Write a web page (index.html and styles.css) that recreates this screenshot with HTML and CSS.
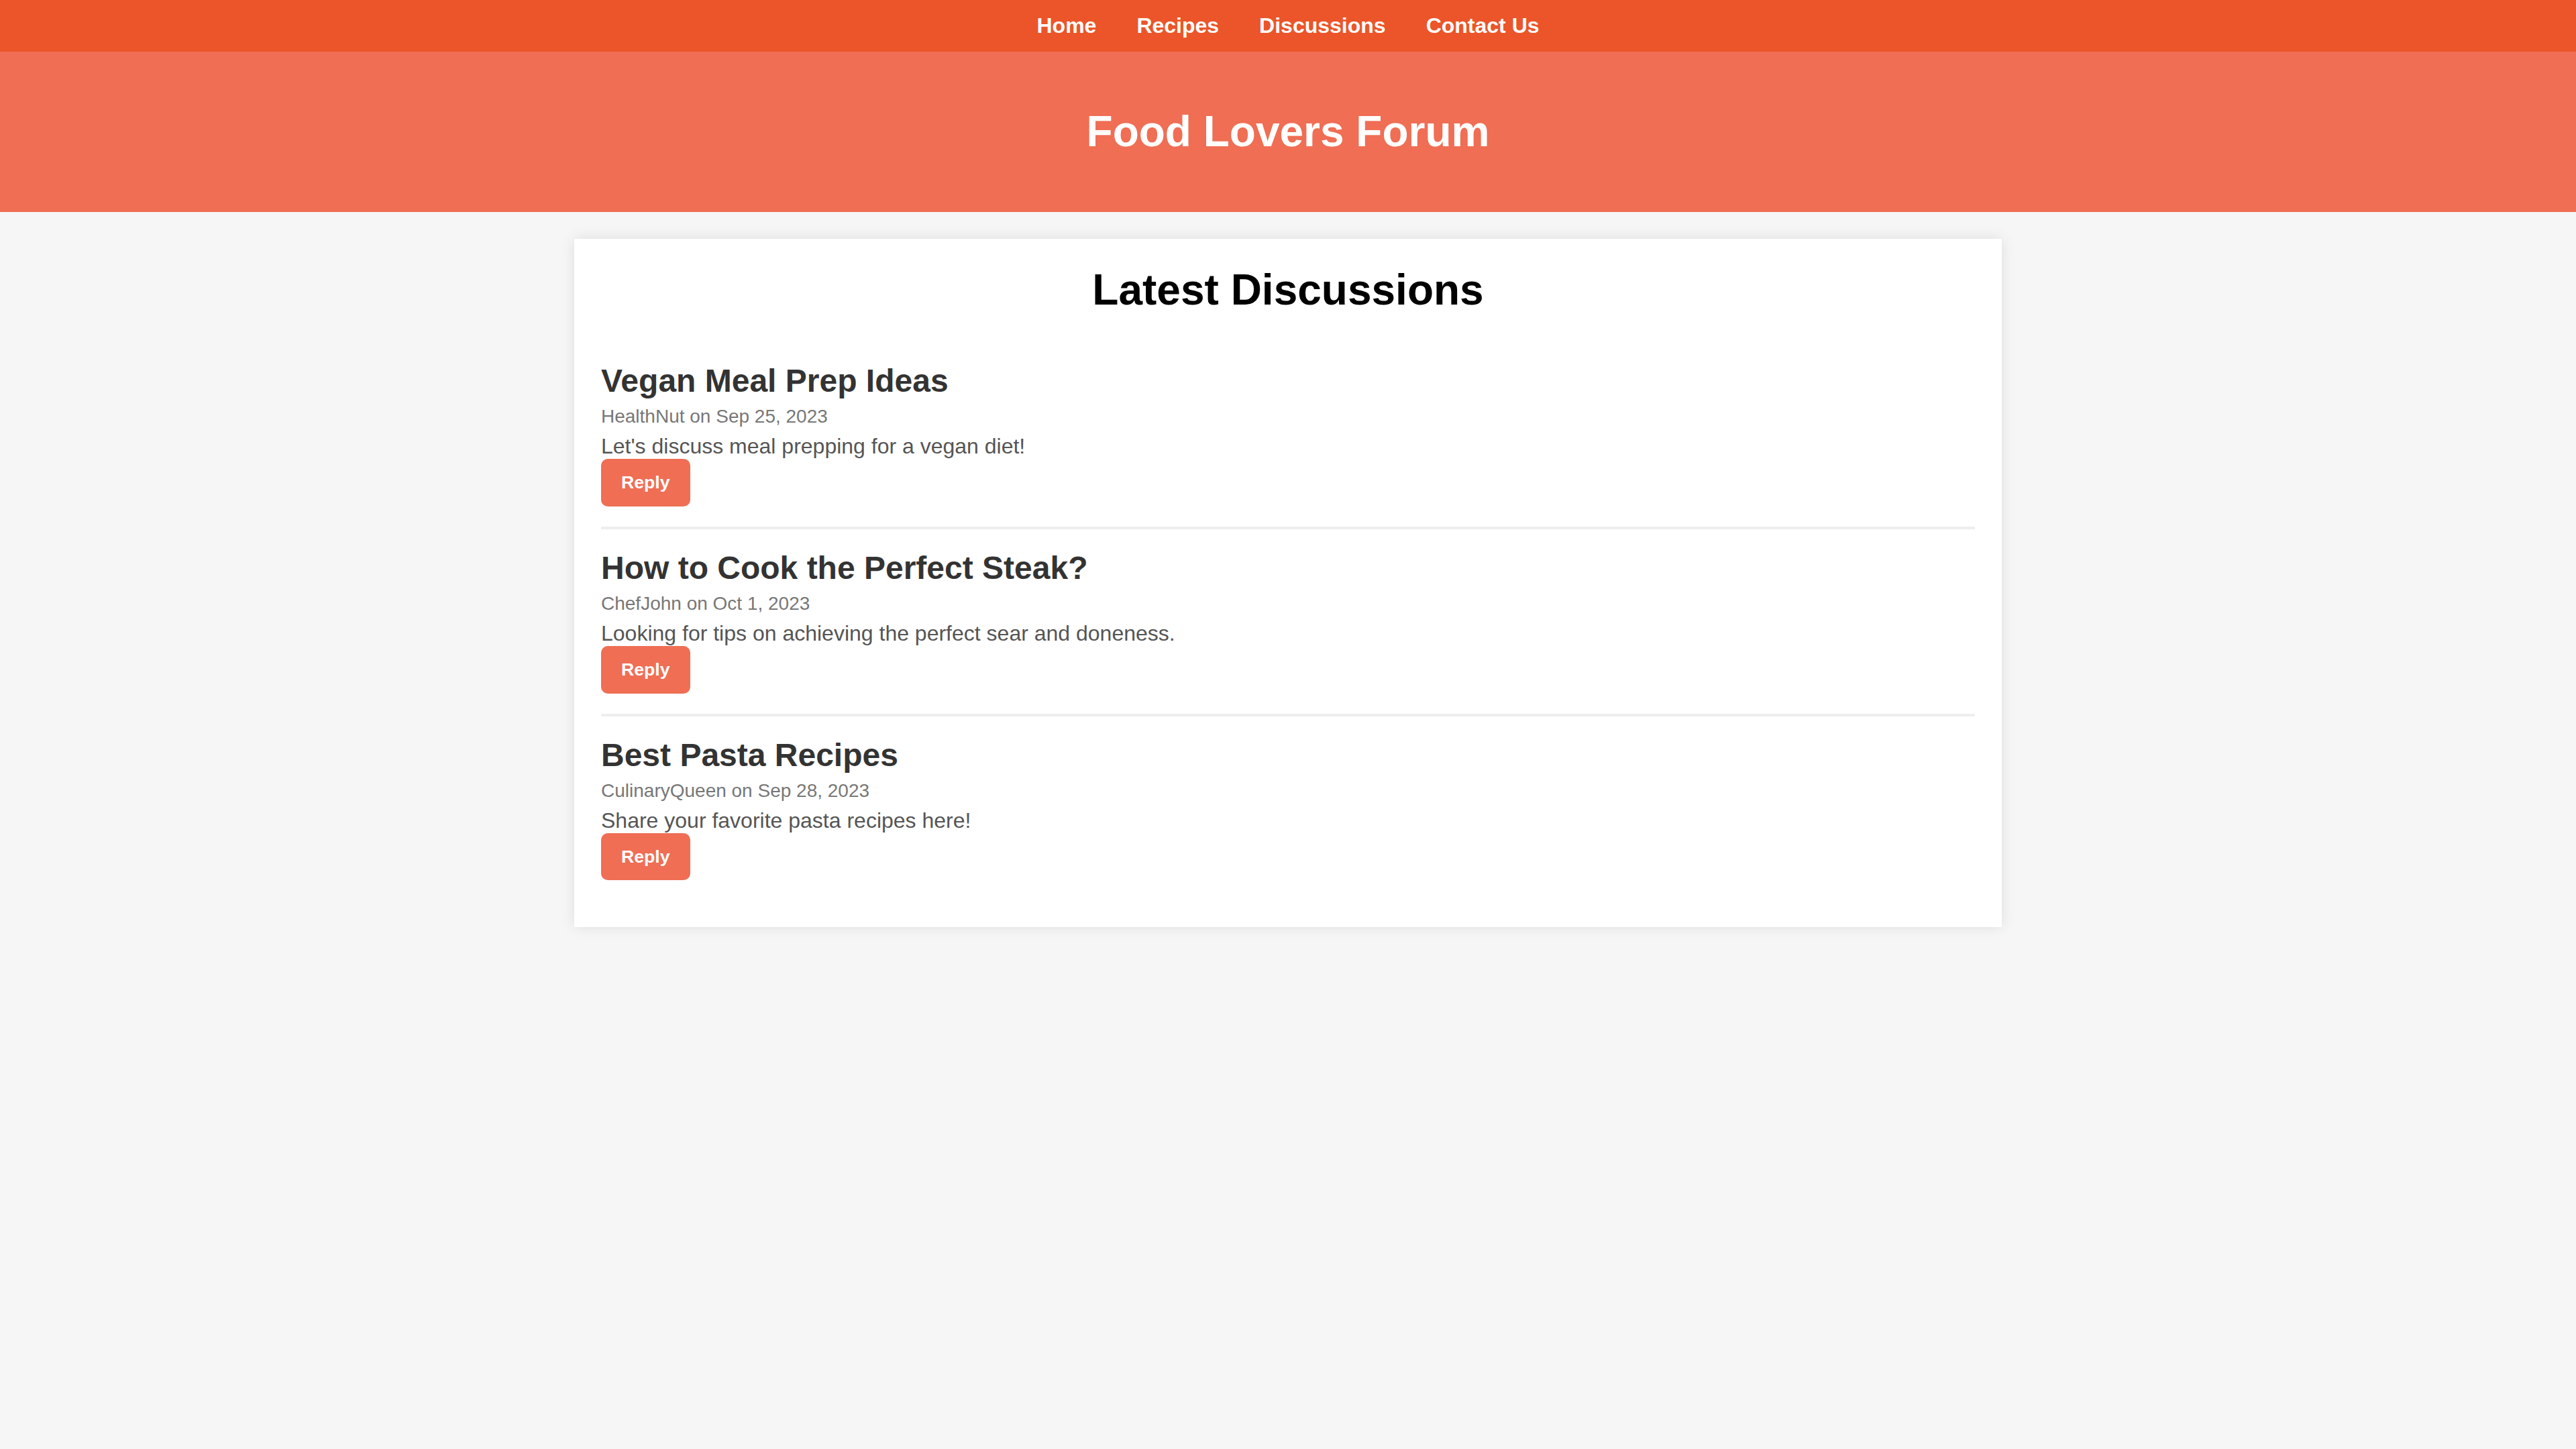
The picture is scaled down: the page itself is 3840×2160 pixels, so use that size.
FILE: index.html
```html
<!DOCTYPE html>
<html lang="en">
<head>
<meta charset="utf-8">
<title>Food Lovers Forum</title>
<link rel="stylesheet" href="styles.css">
</head>
<body>
<nav class="topnav">
  <a href="#">Home</a>
  <a href="#">Recipes</a>
  <a href="#">Discussions</a>
  <a href="#">Contact Us</a>
</nav>
<header class="hero">
  <h1>Food Lovers Forum</h1>
</header>
<main class="card">
  <h2 class="card-title">Latest Discussions</h2>
  <article class="post">
    <h3 class="post-title">Vegan Meal Prep Ideas</h3>
    <div class="post-meta">HealthNut on Sep 25, 2023</div>
    <p class="post-body">Let's discuss meal prepping for a vegan diet!</p>
    <button class="reply-btn">Reply</button>
  </article>
  <article class="post">
    <h3 class="post-title">How to Cook the Perfect Steak?</h3>
    <div class="post-meta">ChefJohn on Oct 1, 2023</div>
    <p class="post-body">Looking for tips on achieving the perfect sear and doneness.</p>
    <button class="reply-btn">Reply</button>
  </article>
  <article class="post">
    <h3 class="post-title">Best Pasta Recipes</h3>
    <div class="post-meta">CulinaryQueen on Sep 28, 2023</div>
    <p class="post-body">Share your favorite pasta recipes here!</p>
    <button class="reply-btn">Reply</button>
  </article>
</main>
</body>
</html>
```
FILE: styles.css
```css
* {
  box-sizing: border-box;
}

html, body {
  margin: 0;
  padding: 0;
}

body {
  font-family: "Liberation Sans", Arial, Helvetica, sans-serif;
  background: #f6f6f6;
  color: #000;
  min-height: 2160px;
}

.topnav {
  background: #eb5529;
  padding: 20px 0;
  display: flex;
  justify-content: center;
  gap: 60px;
  line-height: 36.8px;
}

.topnav a {
  color: #fff;
  text-decoration: none;
  font-weight: bold;
  font-size: 32px;
}

.hero {
  background: #ef6e54;
  padding: 40px 0;
  text-align: center;
}

.hero h1 {
  margin: 43px 0;
  color: #fff;
  font-size: 64px;
  line-height: 73.6px;
  font-weight: bold;
}

.card {
  display: block;
  width: 2128px;
  margin: 40px auto;
  padding: 40px;
  background: #fff;
  box-shadow: 0 0 20px rgba(0, 0, 0, 0.1);
}

.card-title {
  margin: 0 0 40px;
  text-align: center;
  font-size: 64px;
  line-height: 73.6px;
  font-weight: bold;
  color: #000;
}

.post {
  padding: 30px 0;
  border-bottom: 4px solid #eeeeee;
  display: flex;
  flex-direction: column;
  align-items: flex-start;
}

.post:last-child {
  border-bottom: none;
}

.post-title {
  margin: 0 0 10px;
  font-size: 48px;
  line-height: 55.2px;
  font-weight: bold;
  color: #333;
}

.post-meta {
  margin: 0 0 10px;
  font-size: 28px;
  line-height: 32.2px;
  color: #777;
}

.post-body {
  margin: 0;
  font-size: 32px;
  line-height: 36.8px;
  color: #555;
}

.reply-btn {
  font-family: "Liberation Sans", Arial, Helvetica, sans-serif;
  font-size: 26.67px;
  line-height: 30.6px;
  font-weight: bold;
  color: #fff;
  background: #ef6e54;
  border: none;
  border-radius: 10px;
  padding: 20px 30px;
  cursor: pointer;
}
```
